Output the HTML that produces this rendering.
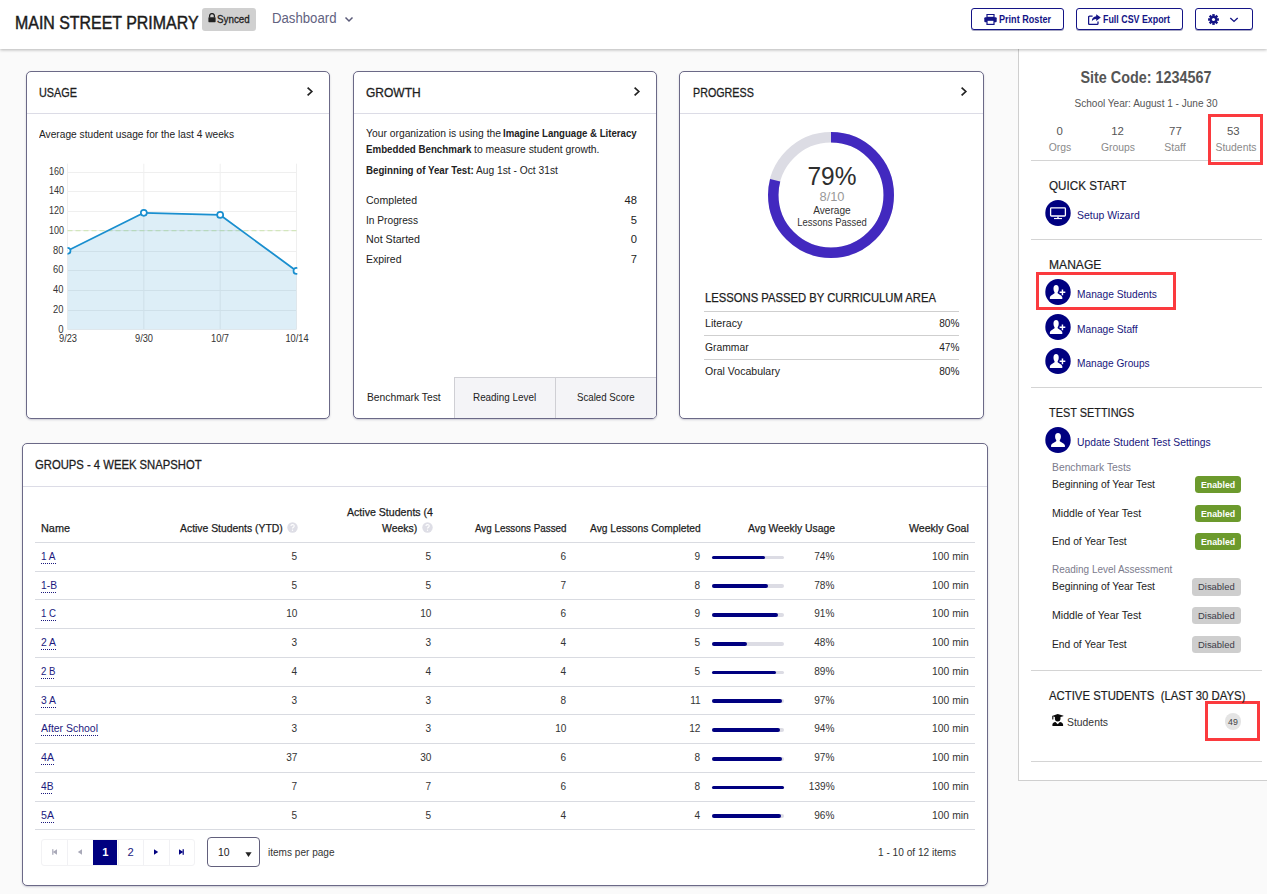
<!DOCTYPE html><html><head><meta charset="utf-8"><title>Main Street Primary - Dashboard</title><style>

html,body{margin:0;padding:0;overflow:hidden}
#p{position:absolute;left:0;top:0;width:1267px;height:894px;overflow:hidden}
body{width:1267px;height:894px;overflow:hidden;position:relative;background:#fafafa;font-family:"Liberation Sans",sans-serif;color:#222}
#p div,#p svg,#p span.a{position:absolute;box-sizing:border-box}
#p .t{white-space:nowrap}
#p b{font-weight:700}

</style></head><body><div id="p">
<div style="left:1018px;top:40px;width:260px;height:741px;background:#fff;border:1px solid #cfcfcf;"></div>
<div style="left:0px;top:0px;width:1267px;height:49px;background:#fff;box-shadow:0 1px 3px rgba(0,0,0,.28);"></div>
<div style="left:202px;top:8px;width:54px;height:23px;background:#d0d0d0;border-radius:3px;"></div>
<svg style="left:208px;top:13px" width="8" height="10" viewBox="0 0 8 10"><path d="M1.6 4.4V3a2.4 2.4 0 0 1 4.8 0v1.4" fill="none" stroke="#222" stroke-width="1.3"/><rect x="0.4" y="4.2" width="7.2" height="5" rx="0.6" fill="#222"/></svg>
<svg style="left:344px;top:16px" width="10" height="7" viewBox="0 0 10 7"><path d="M1.5 1.5 L5 5 L8.5 1.5" fill="none" stroke="#5a5a78" stroke-width="1.5"/></svg>
<div style="left:971px;top:8px;width:93px;height:22px;background:#fff;border:1px solid #141486;border-radius:3px;box-shadow:0 1px 0 rgba(0,0,80,.35);"></div>
<div style="left:1076px;top:8px;width:107px;height:22px;background:#fff;border:1px solid #141486;border-radius:3px;box-shadow:0 1px 0 rgba(0,0,80,.35);"></div>
<div style="left:1195px;top:8px;width:58px;height:22px;background:#fff;border:1px solid #141486;border-radius:3px;box-shadow:0 1px 0 rgba(0,0,80,.35);"></div>
<svg style="left:984px;top:14px" width="13" height="11" viewBox="0 0 13 11"><rect x="3" y="0.4" width="7" height="3" fill="none" stroke="#141486" stroke-width="1.2"/><rect x="0.3" y="3.2" width="12.4" height="5" rx="1" fill="#141486"/><rect x="3" y="6.2" width="7" height="4.2" fill="#fff" stroke="#141486" stroke-width="1.2"/></svg>
<svg style="left:1088px;top:14px" width="13" height="11" viewBox="0 0 13 11"><path d="M4.6 2.2H1.6a1 1 0 0 0-1 1V9.4a1 1 0 0 0 1 1H9a1 1 0 0 0 1-1V7.6" fill="none" stroke="#141486" stroke-width="1.3"/><path d="M8.2 0.2 L12.8 3.6 L8.2 7 V4.9 C6 4.9 4.6 5.7 3.8 7.6 C3.8 4.3 5.6 2.5 8.2 2.3 Z" fill="#141486"/></svg>
<svg style="left:1208px;top:14px" width="11" height="11" viewBox="-5.5 -5.5 11 11"><g fill="#141486"><circle r="3.7"/><rect x="-1.25" y="-5.4" width="2.5" height="3" transform="rotate(0)"/><rect x="-1.25" y="-5.4" width="2.5" height="3" transform="rotate(45)"/><rect x="-1.25" y="-5.4" width="2.5" height="3" transform="rotate(90)"/><rect x="-1.25" y="-5.4" width="2.5" height="3" transform="rotate(135)"/><rect x="-1.25" y="-5.4" width="2.5" height="3" transform="rotate(180)"/><rect x="-1.25" y="-5.4" width="2.5" height="3" transform="rotate(225)"/><rect x="-1.25" y="-5.4" width="2.5" height="3" transform="rotate(270)"/><rect x="-1.25" y="-5.4" width="2.5" height="3" transform="rotate(315)"/></g><circle r="1.55" fill="#fff"/></svg>
<svg style="left:1229px;top:17px" width="10" height="6" viewBox="0 0 10 6"><path d="M1.3 1 L5 4.4 L8.7 1" fill="none" stroke="#141486" stroke-width="1.4"/></svg>
<div style="left:26px;top:71px;width:304px;height:348px;background:#fff;border:1px solid #6b6987;border-radius:5px;box-shadow:0 1px 2px rgba(40,40,80,.22);"></div>
<div style="left:27px;top:113px;width:302px;height:1px;background:#dcdce6;"></div>
<svg style="left:306px;top:86px" width="8" height="10" viewBox="0 0 8 10"><path d="M1.6 1.6 L5.8 5.5 L1.6 9.4" fill="none" stroke="#222" stroke-width="1.7"/></svg>
<div style="left:353px;top:71px;width:304px;height:348px;background:#fff;border:1px solid #6b6987;border-radius:5px;box-shadow:0 1px 2px rgba(40,40,80,.22);"></div>
<div style="left:354px;top:113px;width:302px;height:1px;background:#dcdce6;"></div>
<svg style="left:633px;top:86px" width="8" height="10" viewBox="0 0 8 10"><path d="M1.6 1.6 L5.8 5.5 L1.6 9.4" fill="none" stroke="#222" stroke-width="1.7"/></svg>
<div style="left:679px;top:71px;width:305px;height:348px;background:#fff;border:1px solid #6b6987;border-radius:5px;box-shadow:0 1px 2px rgba(40,40,80,.22);"></div>
<div style="left:680px;top:113px;width:303px;height:1px;background:#dcdce6;"></div>
<svg style="left:960px;top:86px" width="8" height="10" viewBox="0 0 8 10"><path d="M1.6 1.6 L5.8 5.5 L1.6 9.4" fill="none" stroke="#222" stroke-width="1.7"/></svg>
<div style="left:22px;top:443px;width:966px;height:443px;background:#fff;border:1px solid #6b6987;border-radius:5px;box-shadow:0 1px 2px rgba(40,40,80,.22);"></div>
<div style="left:23px;top:486px;width:964px;height:1px;background:#dcdce6;"></div>
<svg style="left:0;top:150px" width="340" height="200" viewBox="0 150 340 200"><defs><clipPath id="cp"><rect x="67.5" y="163.7" width="229.8" height="166.3"/></clipPath></defs><line x1="67.5" x2="296.5" y1="329.5" y2="329.5" stroke="#efefef" stroke-width="1"/><line x1="67.5" x2="296.5" y1="310.5" y2="310.5" stroke="#efefef" stroke-width="1"/><line x1="67.5" x2="296.5" y1="290.5" y2="290.5" stroke="#efefef" stroke-width="1"/><line x1="67.5" x2="296.5" y1="270.5" y2="270.5" stroke="#efefef" stroke-width="1"/><line x1="67.5" x2="296.5" y1="251.5" y2="251.5" stroke="#efefef" stroke-width="1"/><line x1="67.5" x2="296.5" y1="230.5" y2="230.5" stroke="#efefef" stroke-width="1"/><line x1="67.5" x2="296.5" y1="211.5" y2="211.5" stroke="#efefef" stroke-width="1"/><line x1="67.5" x2="296.5" y1="191.5" y2="191.5" stroke="#efefef" stroke-width="1"/><line x1="67.5" x2="296.5" y1="172.5" y2="172.5" stroke="#efefef" stroke-width="1"/><line x1="67.50" x2="67.50" y1="163.7" y2="329.5" stroke="#efefef" stroke-width="1"/><line x1="143.83" x2="143.83" y1="163.7" y2="329.5" stroke="#efefef" stroke-width="1"/><line x1="220.17" x2="220.17" y1="163.7" y2="329.5" stroke="#efefef" stroke-width="1"/><line x1="296.50" x2="296.50" y1="163.7" y2="329.5" stroke="#efefef" stroke-width="1"/><line x1="67.5" x2="296.5" y1="230.6" y2="230.6" stroke="#d3e6bd" stroke-width="1.2" stroke-dasharray="5 3"/><g clip-path="url(#cp)"><polygon points="67.5,329.5 67.50,250.78 143.83,212.80 220.17,214.96 296.50,270.95 296.5,329.5" fill="rgba(26,140,204,0.15)"/><polyline points="67.50,250.78 143.83,212.80 220.17,214.96 296.50,270.95" fill="none" stroke="#1a8fcf" stroke-width="1.8" stroke-linejoin="round"/><circle cx="67.50" cy="250.78" r="3.0" fill="#fff" stroke="#1a8fcf" stroke-width="1.7"/><circle cx="143.83" cy="212.80" r="3.0" fill="#fff" stroke="#1a8fcf" stroke-width="1.7"/><circle cx="220.17" cy="214.96" r="3.0" fill="#fff" stroke="#1a8fcf" stroke-width="1.7"/><circle cx="296.50" cy="270.95" r="3.0" fill="#fff" stroke="#1a8fcf" stroke-width="1.7"/></g></svg>
<div style="left:454px;top:377px;width:102px;height:41px;background:#f4f4f7;border:1px solid #cfcfd4;border-right:0;border-bottom:0;"></div>
<div style="left:555px;top:377px;width:101px;height:41px;background:#f4f4f7;border-left:1px solid #cfcfd4;border-top:1px solid #cfcfd4;border-radius:0 0 4px 0;"></div>
<svg style="left:760px;top:124px" width="142" height="142" viewBox="760 124 142 142"><circle cx="831.0" cy="195.0" r="57.75" fill="none" stroke="#dcdce4" stroke-width="10.5"/><circle cx="831.0" cy="195.0" r="57.75" fill="none" stroke="#4229bf" stroke-width="10.5" stroke-dasharray="286.65 362.85" transform="rotate(-90 831.0 195.0)"/></svg>
<div style="left:704px;top:311px;width:255px;height:1px;background:#cfcfcf;"></div>
<div style="left:704px;top:335px;width:255px;height:1px;background:#cfcfcf;"></div>
<div style="left:704px;top:359px;width:255px;height:1px;background:#cfcfcf;"></div>
<div style="left:1031px;top:160px;width:231px;height:1px;background:#d4d4d4;"></div>
<div style="left:1031px;top:239px;width:231px;height:1px;background:#d4d4d4;"></div>
<div style="left:1031px;top:387px;width:231px;height:1px;background:#d4d4d4;"></div>
<div style="left:1031px;top:670px;width:231px;height:1px;background:#d4d4d4;"></div>
<div style="left:1031px;top:761px;width:231px;height:1px;background:#d4d4d4;"></div>
<div style="left:1208px;top:114px;width:55px;height:51px;border:3px solid #fb3a3e;"></div>
<svg style="left:1045px;top:200px" width="26" height="26" viewBox="-13 -13 26 26"><ellipse rx="12.7" ry="12.95" fill="#000080"/><rect x="-7.4" y="-5.1" width="14.8" height="8.1" rx="0.8" fill="none" stroke="#fff" stroke-width="1.3"/><rect x="-0.7" y="3.6" width="1.4" height="1.7" fill="#fff"/><rect x="-4" y="5.0" width="8" height="1.1" fill="#fff"/></svg>
<div style="left:1036px;top:272px;width:140px;height:38px;border:3px solid #fb3a3e;"></div>
<svg style="left:1045px;top:279px" width="26" height="26" viewBox="-13 -13 26 26"><ellipse rx="12.7" ry="12.95" fill="#000080"/><g transform="translate(-1.9 0) scale(0.9 1)" fill="#fff"><ellipse cx="0" cy="-3.3" rx="2.9" ry="3.7"/><path d="M-1.7 -1 L-1.7 0.9 C-2.2 2.2 -6.1 2.6 -6.9 5.2 L-6.9 7.1 L6.9 7.1 L6.9 5.2 C6.1 2.6 2.2 2.2 1.7 0.9 L1.7 -1 Z"/></g><path d="M1.6 0.3 H7.3 M4.45 -2.55 V3.15" stroke="#fff" stroke-width="1.45" fill="none"/></svg>
<svg style="left:1045px;top:314px" width="26" height="26" viewBox="-13 -13 26 26"><ellipse rx="12.7" ry="12.95" fill="#000080"/><g transform="translate(-1.9 0) scale(0.9 1)" fill="#fff"><ellipse cx="0" cy="-3.3" rx="2.9" ry="3.7"/><path d="M-1.7 -1 L-1.7 0.9 C-2.2 2.2 -6.1 2.6 -6.9 5.2 L-6.9 7.1 L6.9 7.1 L6.9 5.2 C6.1 2.6 2.2 2.2 1.7 0.9 L1.7 -1 Z"/></g><path d="M1.6 0.3 H7.3 M4.45 -2.55 V3.15" stroke="#fff" stroke-width="1.45" fill="none"/></svg>
<svg style="left:1045px;top:348px" width="26" height="26" viewBox="-13 -13 26 26"><ellipse rx="12.7" ry="12.95" fill="#000080"/><g transform="translate(-1.9 0) scale(0.9 1)" fill="#fff"><ellipse cx="0" cy="-3.3" rx="2.9" ry="3.7"/><path d="M-1.7 -1 L-1.7 0.9 C-2.2 2.2 -6.1 2.6 -6.9 5.2 L-6.9 7.1 L6.9 7.1 L6.9 5.2 C6.1 2.6 2.2 2.2 1.7 0.9 L1.7 -1 Z"/></g><path d="M1.6 0.3 H7.3 M4.45 -2.55 V3.15" stroke="#fff" stroke-width="1.45" fill="none"/></svg>
<svg style="left:1045px;top:427px" width="26" height="26" viewBox="-13 -13 26 26"><ellipse rx="12.7" ry="12.95" fill="#000080"/><g transform="translate(0 0) scale(1 1)" fill="#fff"><ellipse cx="0" cy="-3.3" rx="2.9" ry="3.7"/><path d="M-1.7 -1 L-1.7 0.9 C-2.2 2.2 -6.1 2.6 -6.9 5.2 L-6.9 7.1 L6.9 7.1 L6.9 5.2 C6.1 2.6 2.2 2.2 1.7 0.9 L1.7 -1 Z"/></g></svg>
<div style="left:1195px;top:476px;width:46px;height:17px;background:#6c9a2d;border-radius:3.5px;"></div>
<div style="left:1195px;top:505px;width:46px;height:17px;background:#6c9a2d;border-radius:3.5px;"></div>
<div style="left:1195px;top:533px;width:46px;height:17px;background:#6c9a2d;border-radius:3.5px;"></div>
<div style="left:1192px;top:578px;width:49px;height:18px;background:#cecece;border-radius:3.5px;"></div>
<div style="left:1192px;top:607px;width:49px;height:17px;background:#cecece;border-radius:3.5px;"></div>
<div style="left:1192px;top:636px;width:49px;height:17px;background:#cecece;border-radius:3.5px;"></div>
<svg style="left:1052.4px;top:713.6px" width="11.6" height="12.4" viewBox="0 0 11.6 12.4"><g fill="#0a0a0a"><path d="M5.7 0 L11.6 1.7 L11.2 2.3 L8.6 3 L2.8 3 L0 2 Z"/><rect x="0.25" y="2" width="1.1" height="3.6" rx="0.4"/><path d="M2.9 2.8 H8.5 V4.6 A2.8 2.9 0 0 1 2.9 4.6 Z"/><path d="M3.5 7.9 L5.7 10.2 L7.9 7.9 C9.9 8.2 11.1 9.2 11.1 10.6 V12.3 H0.4 V10.6 C0.4 9.2 1.5 8.2 3.5 7.9 Z"/></g></svg>
<div style="left:1224.7px;top:713.0px;width:16.4px;height:17.4px;background:#e4e4e4;border-radius:8.5px;"></div>
<div style="left:1205px;top:701px;width:55px;height:40px;border:3px solid #fb3a3e;"></div>
<svg style="left:287.3px;top:522.1px" width="11" height="11" viewBox="-5.5 -5.5 11 11"><circle r="5.2" fill="#dedee6"/><path d="M-1.6 -1.5 C-1.6 -3.4 1.7 -3.4 1.7 -1.5 C1.7 -0.2 0 -0.3 0 1.1" fill="none" stroke="#fff" stroke-width="1.1"/><circle cx="0" cy="2.7" r="0.7" fill="#fff"/></svg>
<svg style="left:421.6px;top:522.1px" width="11" height="11" viewBox="-5.5 -5.5 11 11"><circle r="5.2" fill="#dedee6"/><path d="M-1.6 -1.5 C-1.6 -3.4 1.7 -3.4 1.7 -1.5 C1.7 -0.2 0 -0.3 0 1.1" fill="none" stroke="#fff" stroke-width="1.1"/><circle cx="0" cy="2.7" r="0.7" fill="#fff"/></svg>
<div style="left:35px;top:542px;width:940px;height:1px;background:#d9dbe1;"></div>
<div style="left:35px;top:571px;width:940px;height:1px;background:#d9dbe1;"></div>
<div style="left:41px;top:563px;width:15px;height:1px;border-bottom:1px dotted #1c1a7e;"></div>
<div style="left:712px;top:556px;width:72px;height:3px;background:#dcdce4;border-radius:2px;"></div>
<div style="left:712px;top:556px;width:53px;height:3px;background:#000080;border-radius:2px;"></div>
<div style="left:35px;top:599px;width:940px;height:1px;background:#d9dbe1;"></div>
<div style="left:41px;top:592px;width:15px;height:1px;border-bottom:1px dotted #1c1a7e;"></div>
<div style="left:712px;top:584px;width:72px;height:4px;background:#dcdce4;border-radius:2px;"></div>
<div style="left:712px;top:584px;width:56px;height:4px;background:#000080;border-radius:2px;"></div>
<div style="left:35px;top:628px;width:940px;height:1px;background:#d9dbe1;"></div>
<div style="left:41px;top:620px;width:15px;height:1px;border-bottom:1px dotted #1c1a7e;"></div>
<div style="left:712px;top:613px;width:72px;height:4px;background:#dcdce4;border-radius:2px;"></div>
<div style="left:712px;top:613px;width:66px;height:4px;background:#000080;border-radius:2px;"></div>
<div style="left:35px;top:657px;width:940px;height:1px;background:#d9dbe1;"></div>
<div style="left:41px;top:649px;width:15px;height:1px;border-bottom:1px dotted #1c1a7e;"></div>
<div style="left:712px;top:642px;width:72px;height:4px;background:#dcdce4;border-radius:2px;"></div>
<div style="left:712px;top:642px;width:35px;height:4px;background:#000080;border-radius:2px;"></div>
<div style="left:35px;top:686px;width:940px;height:1px;background:#d9dbe1;"></div>
<div style="left:41px;top:678px;width:13px;height:1px;border-bottom:1px dotted #1c1a7e;"></div>
<div style="left:712px;top:671px;width:72px;height:3px;background:#dcdce4;border-radius:2px;"></div>
<div style="left:712px;top:671px;width:64px;height:3px;background:#000080;border-radius:2px;"></div>
<div style="left:35px;top:714px;width:940px;height:1px;background:#d9dbe1;"></div>
<div style="left:41px;top:707px;width:15px;height:1px;border-bottom:1px dotted #1c1a7e;"></div>
<div style="left:712px;top:699px;width:72px;height:4px;background:#dcdce4;border-radius:2px;"></div>
<div style="left:712px;top:699px;width:70px;height:4px;background:#000080;border-radius:2px;"></div>
<div style="left:35px;top:743px;width:940px;height:1px;background:#d9dbe1;"></div>
<div style="left:41px;top:735px;width:57px;height:1px;border-bottom:1px dotted #1c1a7e;"></div>
<div style="left:712px;top:728px;width:72px;height:4px;background:#dcdce4;border-radius:2px;"></div>
<div style="left:712px;top:728px;width:68px;height:4px;background:#000080;border-radius:2px;"></div>
<div style="left:35px;top:772px;width:940px;height:1px;background:#d9dbe1;"></div>
<div style="left:41px;top:764px;width:13px;height:1px;border-bottom:1px dotted #1c1a7e;"></div>
<div style="left:712px;top:757px;width:72px;height:4px;background:#dcdce4;border-radius:2px;"></div>
<div style="left:712px;top:757px;width:70px;height:4px;background:#000080;border-radius:2px;"></div>
<div style="left:35px;top:801px;width:940px;height:1px;background:#d9dbe1;"></div>
<div style="left:41px;top:793px;width:11px;height:1px;border-bottom:1px dotted #1c1a7e;"></div>
<div style="left:712px;top:786px;width:72px;height:3px;background:#dcdce4;border-radius:2px;"></div>
<div style="left:712px;top:786px;width:72px;height:3px;background:#000080;border-radius:2px;"></div>
<div style="left:35px;top:829px;width:940px;height:1px;background:#d9dbe1;"></div>
<div style="left:41px;top:822px;width:13px;height:1px;border-bottom:1px dotted #1c1a7e;"></div>
<div style="left:712px;top:814px;width:72px;height:4px;background:#dcdce4;border-radius:2px;"></div>
<div style="left:712px;top:814px;width:69px;height:4px;background:#000080;border-radius:2px;"></div>
<div style="left:41px;top:839px;width:154px;height:27px;background:#fff;border:1px solid #f2f2f4;border-radius:3px;"></div>
<div style="left:67px;top:840px;width:1px;height:25px;background:#f1f1f4;"></div>
<div style="left:143px;top:840px;width:1px;height:25px;background:#f1f1f4;"></div>
<div style="left:169px;top:840px;width:1px;height:25px;background:#f1f1f4;"></div>
<div style="left:118px;top:840px;width:1px;height:25px;background:#f1f1f4;"></div>
<div style="left:93px;top:840px;width:24px;height:25px;background:#000080;"></div>
<svg style="left:49.6px;top:846.9px" width="10" height="10" viewBox="-5 -5 10 10"><g fill="#a9a9b8"><path d="M2 -2.8 L-2.2 0 L2 2.8 Z"/><rect x="-2.8" y="-2.8" width="1.2" height="5.6"/></g></svg>
<svg style="left:75.0px;top:846.9px" width="10" height="10" viewBox="-5 -5 10 10"><g fill="#a9a9b8"><path d="M2 -2.8 L-2.2 0 L2 2.8 Z"/></g></svg>
<svg style="left:151.1px;top:846.9px" width="10" height="10" viewBox="-5 -5 10 10"><g fill="#000080"><path d="M-2 -2.8 L2.2 0 L-2 2.8 Z"/></g></svg>
<svg style="left:176.1px;top:846.9px" width="10" height="10" viewBox="-5 -5 10 10"><g fill="#000080"><path d="M-2 -2.8 L2.2 0 L-2 2.8 Z"/><rect x="1.6" y="-2.8" width="1.2" height="5.6"/></g></svg>
<div style="left:207px;top:837px;width:53px;height:30px;background:#fff;border:1px solid #62607c;border-radius:4px;"></div>
<svg style="left:244px;top:851px" width="9" height="7" viewBox="0 0 9 7"><path d="M1.4 1.2 H7.6 L4.5 5.9 Z" fill="#222"/></svg>
<div class="t" style="top:12.80px;height:20px;line-height:20px;font-size:18px;color:#1b1b1b;left:15px;transform-origin:0 50%;transform:scaleX(0.8849);-webkit-text-stroke:0.45px #1b1b1b;">MAIN STREET PRIMARY</div>
<div class="t" style="top:9.30px;height:20px;line-height:20px;font-size:11px;color:#222;left:217.2px;transform-origin:0 50%;transform:scaleX(0.8909);-webkit-text-stroke:0.3px #222;">Synced</div>
<div class="t" style="top:8.30px;height:20px;line-height:20px;font-size:14px;color:#626280;left:272px;transform-origin:0 50%;transform:scaleX(0.9416);">Dashboard</div>
<div class="t" style="top:10.00px;height:20px;line-height:20px;font-size:10px;color:#141486;font-weight:700;left:998.8px;transform-origin:0 50%;transform:scaleX(0.9085);">Print Roster</div>
<div class="t" style="top:10.00px;height:20px;line-height:20px;font-size:10px;color:#141486;font-weight:700;left:1103.4px;transform-origin:0 50%;transform:scaleX(0.8867);">Full CSV Export</div>
<div class="t" style="top:83.10px;height:20px;line-height:20px;font-size:13px;color:#1d1d1d;left:39px;transform-origin:0 50%;transform:scaleX(0.8349);-webkit-text-stroke:0.3px #1d1d1d;">USAGE</div>
<div class="t" style="top:83.10px;height:20px;line-height:20px;font-size:13px;color:#1d1d1d;left:365.5px;transform-origin:0 50%;transform:scaleX(0.9237);-webkit-text-stroke:0.3px #1d1d1d;">GROWTH</div>
<div class="t" style="top:83.10px;height:20px;line-height:20px;font-size:13px;color:#1d1d1d;left:692.7px;transform-origin:0 50%;transform:scaleX(0.8251);-webkit-text-stroke:0.3px #1d1d1d;">PROGRESS</div>
<div class="t" style="top:455.20px;height:20px;line-height:20px;font-size:13px;color:#1d1d1d;left:35.2px;transform-origin:0 50%;transform:scaleX(0.8670);-webkit-text-stroke:0.3px #1d1d1d;">GROUPS - 4 WEEK SNAPSHOT</div>
<div class="t" style="top:124.20px;height:20px;line-height:20px;font-size:11.2px;color:#222;left:39px;transform-origin:0 50%;transform:scaleX(0.9097);">Average student usage for the last 4 weeks</div>
<div class="t" style="top:320.00px;height:20px;line-height:20px;font-size:10.2px;color:#333;right:1203.40px;transform-origin:100% 50%;transform:scaleX(0.9344);">0</div>
<div class="t" style="top:300.00px;height:20px;line-height:20px;font-size:10.2px;color:#333;right:1203.40px;transform-origin:100% 50%;transform:scaleX(0.9168);">20</div>
<div class="t" style="top:280.00px;height:20px;line-height:20px;font-size:10.2px;color:#333;right:1203.40px;transform-origin:100% 50%;transform:scaleX(0.9168);">40</div>
<div class="t" style="top:260.00px;height:20px;line-height:20px;font-size:10.2px;color:#333;right:1203.40px;transform-origin:100% 50%;transform:scaleX(0.9168);">60</div>
<div class="t" style="top:241.00px;height:20px;line-height:20px;font-size:10.2px;color:#333;right:1203.40px;transform-origin:100% 50%;transform:scaleX(0.9168);">80</div>
<div class="t" style="top:221.00px;height:20px;line-height:20px;font-size:10.2px;color:#333;right:1203.40px;transform-origin:100% 50%;transform:scaleX(0.8824);">100</div>
<div class="t" style="top:201.00px;height:20px;line-height:20px;font-size:10.2px;color:#333;right:1203.40px;transform-origin:100% 50%;transform:scaleX(0.8824);">120</div>
<div class="t" style="top:181.00px;height:20px;line-height:20px;font-size:10.2px;color:#333;right:1203.40px;transform-origin:100% 50%;transform:scaleX(0.8824);">140</div>
<div class="t" style="top:162.00px;height:20px;line-height:20px;font-size:10.2px;color:#333;right:1203.40px;transform-origin:100% 50%;transform:scaleX(0.8824);">160</div>
<div class="t" style="top:329.00px;height:20px;line-height:20px;font-size:10.2px;color:#333;left:-232.50px;width:600px;text-align:center;transform-origin:50% 50%;transform:scaleX(0.9100);"><span>9/23</span></div>
<div class="t" style="top:329.00px;height:20px;line-height:20px;font-size:10.2px;color:#333;left:-156.17px;width:600px;text-align:center;transform-origin:50% 50%;transform:scaleX(0.9100);"><span>9/30</span></div>
<div class="t" style="top:329.00px;height:20px;line-height:20px;font-size:10.2px;color:#333;left:-79.83px;width:600px;text-align:center;transform-origin:50% 50%;transform:scaleX(0.9100);"><span>10/7</span></div>
<div class="t" style="top:329.00px;height:20px;line-height:20px;font-size:10.2px;color:#333;left:-3.50px;width:600px;text-align:center;transform-origin:50% 50%;transform:scaleX(0.9100);"><span>10/14</span></div>
<div class="t" style="top:123.30px;height:20px;line-height:20px;font-size:11.2px;color:#222;left:365.7px;transform-origin:0 50%;transform:scaleX(0.9223);">Your organization is using the</div>
<div class="t" style="top:123.30px;height:20px;line-height:20px;font-size:11.2px;color:#222;font-weight:700;left:503.2px;transform-origin:0 50%;transform:scaleX(0.8595);">Imagine Language &amp; Literacy</div>
<div class="t" style="top:139.20px;height:20px;line-height:20px;font-size:11.2px;color:#222;font-weight:700;left:365.7px;transform-origin:0 50%;transform:scaleX(0.8702);">Embedded Benchmark</div>
<div class="t" style="top:139.20px;height:20px;line-height:20px;font-size:11.2px;color:#222;left:474.1px;transform-origin:0 50%;transform:scaleX(0.9257);">to measure student growth.</div>
<div class="t" style="top:160.10px;height:20px;line-height:20px;font-size:11.2px;color:#222;font-weight:700;left:365.7px;transform-origin:0 50%;transform:scaleX(0.8691);">Beginning of Year Test:</div>
<div class="t" style="top:160.10px;height:20px;line-height:20px;font-size:11.2px;color:#222;left:476.1px;transform-origin:0 50%;transform:scaleX(0.9146);">Aug 1st - Oct 31st</div>
<div class="t" style="top:190.40px;height:20px;line-height:20px;font-size:11.2px;color:#222;left:365.7px;transform-origin:0 50%;transform:scaleX(0.9425);">Completed</div>
<div class="t" style="top:190.40px;height:20px;line-height:20px;font-size:11.2px;color:#222;right:630.10px;transform-origin:100% 50%;">48</div>
<div class="t" style="top:210.30px;height:20px;line-height:20px;font-size:11.2px;color:#222;left:365.7px;transform-origin:0 50%;transform:scaleX(0.9088);">In Progress</div>
<div class="t" style="top:210.30px;height:20px;line-height:20px;font-size:11.2px;color:#222;right:630.10px;transform-origin:100% 50%;">5</div>
<div class="t" style="top:229.10px;height:20px;line-height:20px;font-size:11.2px;color:#222;left:365.7px;transform-origin:0 50%;transform:scaleX(0.9542);">Not Started</div>
<div class="t" style="top:229.10px;height:20px;line-height:20px;font-size:11.2px;color:#222;right:630.10px;transform-origin:100% 50%;">0</div>
<div class="t" style="top:249.10px;height:20px;line-height:20px;font-size:11.2px;color:#222;left:365.7px;transform-origin:0 50%;transform:scaleX(0.9357);">Expired</div>
<div class="t" style="top:249.10px;height:20px;line-height:20px;font-size:11.2px;color:#222;right:630.10px;transform-origin:100% 50%;">7</div>
<div class="t" style="top:387.30px;height:20px;line-height:20px;font-size:11.2px;color:#222;left:367px;transform-origin:0 50%;transform:scaleX(0.9211);">Benchmark Test</div>
<div class="t" style="top:387.30px;height:20px;line-height:20px;font-size:11.2px;color:#222;left:473.2px;transform-origin:0 50%;transform:scaleX(0.8821);">Reading Level</div>
<div class="t" style="top:387.30px;height:20px;line-height:20px;font-size:11.2px;color:#222;left:577px;transform-origin:0 50%;transform:scaleX(0.8671);">Scaled Score</div>
<div class="t" style="top:161.00px;height:30px;line-height:30px;font-size:25px;color:#2e2e2e;left:531.50px;width:600px;text-align:center;transform-origin:50% 50%;transform:scaleX(0.9791);"><span>79%</span></div>
<div class="t" style="top:186.80px;height:20px;line-height:20px;font-size:12.5px;color:#999;left:531.50px;width:600px;text-align:center;transform-origin:50% 50%;transform:scaleX(1.0270);"><span>8/10</span></div>
<div class="t" style="top:200.40px;height:20px;line-height:20px;font-size:11.2px;color:#333;left:531.60px;width:600px;text-align:center;transform-origin:50% 50%;transform:scaleX(0.9043);"><span>Average</span></div>
<div class="t" style="top:212.00px;height:20px;line-height:20px;font-size:11.2px;color:#333;left:531.70px;width:600px;text-align:center;transform-origin:50% 50%;transform:scaleX(0.8454);"><span>Lessons Passed</span></div>
<div class="t" style="top:288.00px;height:20px;line-height:20px;font-size:13px;color:#1d1d1d;left:704.6px;transform-origin:0 50%;transform:scaleX(0.8657);-webkit-text-stroke:0.25px #1d1d1d;">LESSONS PASSED BY CURRICULUM AREA</div>
<div class="t" style="top:313.30px;height:20px;line-height:20px;font-size:11.2px;color:#222;left:704.7px;transform-origin:0 50%;transform:scaleX(0.9518);">Literacy</div>
<div class="t" style="top:313.30px;height:20px;line-height:20px;font-size:11.2px;color:#222;right:308.00px;transform-origin:100% 50%;transform:scaleX(0.9015);">80%</div>
<div class="t" style="top:337.20px;height:20px;line-height:20px;font-size:11.2px;color:#222;left:704.7px;transform-origin:0 50%;transform:scaleX(0.9228);">Grammar</div>
<div class="t" style="top:337.20px;height:20px;line-height:20px;font-size:11.2px;color:#222;right:308.00px;transform-origin:100% 50%;transform:scaleX(0.9015);">47%</div>
<div class="t" style="top:361.00px;height:20px;line-height:20px;font-size:11.2px;color:#222;left:704.7px;transform-origin:0 50%;transform:scaleX(0.9421);">Oral Vocabulary</div>
<div class="t" style="top:361.00px;height:20px;line-height:20px;font-size:11.2px;color:#222;right:308.00px;transform-origin:100% 50%;transform:scaleX(0.9015);">80%</div>
<div class="t" style="top:67.60px;height:20px;line-height:20px;font-size:16px;color:#555;font-weight:700;left:846.40px;width:600px;text-align:center;transform-origin:50% 50%;transform:scaleX(0.8981);"><span>Site Code: 1234567</span></div>
<div class="t" style="top:93.20px;height:20px;line-height:20px;font-size:11.2px;color:#555;left:846.30px;width:600px;text-align:center;transform-origin:50% 50%;transform:scaleX(0.8980);"><span>School Year: August 1 - June 30</span></div>
<div class="t" style="top:120.90px;height:20px;line-height:20px;font-size:11.4px;color:#555;left:759.60px;width:600px;text-align:center;transform-origin:50% 50%;"><span>0</span></div>
<div class="t" style="top:137.20px;height:20px;line-height:20px;font-size:11.4px;color:#8a8a8a;left:759.60px;width:600px;text-align:center;transform-origin:50% 50%;transform:scaleX(0.9114);"><span>Orgs</span></div>
<div class="t" style="top:120.90px;height:20px;line-height:20px;font-size:11.4px;color:#555;left:817.50px;width:600px;text-align:center;transform-origin:50% 50%;"><span>12</span></div>
<div class="t" style="top:137.20px;height:20px;line-height:20px;font-size:11.4px;color:#8a8a8a;left:817.50px;width:600px;text-align:center;transform-origin:50% 50%;transform:scaleX(0.9101);"><span>Groups</span></div>
<div class="t" style="top:120.90px;height:20px;line-height:20px;font-size:11.4px;color:#555;left:875.40px;width:600px;text-align:center;transform-origin:50% 50%;"><span>77</span></div>
<div class="t" style="top:137.20px;height:20px;line-height:20px;font-size:11.4px;color:#8a8a8a;left:875.40px;width:600px;text-align:center;transform-origin:50% 50%;transform:scaleX(0.9254);"><span>Staff</span></div>
<div class="t" style="top:120.90px;height:20px;line-height:20px;font-size:11.4px;color:#555;left:933.30px;width:600px;text-align:center;transform-origin:50% 50%;"><span>53</span></div>
<div class="t" style="top:137.20px;height:20px;line-height:20px;font-size:11.4px;color:#8a8a8a;left:935.70px;width:600px;text-align:center;transform-origin:50% 50%;transform:scaleX(0.9117);"><span>Students</span></div>
<div class="t" style="top:176.00px;height:20px;line-height:20px;font-size:13px;color:#1d1d1d;left:1048.5px;transform-origin:0 50%;transform:scaleX(0.8979);-webkit-text-stroke:0.2px #1d1d1d;">QUICK START</div>
<div class="t" style="top:255.00px;height:20px;line-height:20px;font-size:13px;color:#1d1d1d;left:1048.5px;transform-origin:0 50%;transform:scaleX(0.9300);-webkit-text-stroke:0.2px #1d1d1d;">MANAGE</div>
<div class="t" style="top:403.00px;height:20px;line-height:20px;font-size:13px;color:#1d1d1d;left:1048.5px;transform-origin:0 50%;transform:scaleX(0.8395);-webkit-text-stroke:0.2px #1d1d1d;">TEST SETTINGS</div>
<div class="t" style="top:686.00px;height:20px;line-height:20px;font-size:13px;color:#1d1d1d;left:1048.5px;transform-origin:0 50%;transform:scaleX(0.8733);-webkit-text-stroke:0.2px #1d1d1d;">ACTIVE STUDENTS&nbsp; (LAST 30 DAYS)</div>
<div class="t" style="top:205.10px;height:20px;line-height:20px;font-size:11.2px;color:#17167c;left:1077.1px;transform-origin:0 50%;transform:scaleX(0.9336);">Setup Wizard</div>
<div class="t" style="top:284.00px;height:20px;line-height:20px;font-size:11.2px;color:#17167c;left:1077.1px;transform-origin:0 50%;transform:scaleX(0.9110);">Manage Students</div>
<div class="t" style="top:319.10px;height:20px;line-height:20px;font-size:11.2px;color:#17167c;left:1077.1px;transform-origin:0 50%;transform:scaleX(0.9134);">Manage Staff</div>
<div class="t" style="top:353.10px;height:20px;line-height:20px;font-size:11.2px;color:#17167c;left:1077.1px;transform-origin:0 50%;transform:scaleX(0.9048);">Manage Groups</div>
<div class="t" style="top:432.30px;height:20px;line-height:20px;font-size:11.2px;color:#17167c;left:1077.1px;transform-origin:0 50%;transform:scaleX(0.9232);">Update Student Test Settings</div>
<div class="t" style="top:457.20px;height:20px;line-height:20px;font-size:11.2px;color:#7b7b8c;left:1051.9px;transform-origin:0 50%;transform:scaleX(0.9228);">Benchmark Tests</div>
<div class="t" style="top:559.00px;height:20px;line-height:20px;font-size:11.2px;color:#7b7b8c;left:1051.9px;transform-origin:0 50%;transform:scaleX(0.8907);">Reading Level Assessment</div>
<div class="t" style="top:474.00px;height:20px;line-height:20px;font-size:11.2px;color:#222;left:1051.9px;transform-origin:0 50%;transform:scaleX(0.9268);">Beginning of Year Test</div>
<div class="t" style="top:475.00px;height:20px;line-height:20px;font-size:9.6px;color:#fff;font-weight:700;left:1201.0px;transform-origin:0 50%;transform:scaleX(0.9162);">Enabled</div>
<div class="t" style="top:503.20px;height:20px;line-height:20px;font-size:11.2px;color:#222;left:1051.9px;transform-origin:0 50%;transform:scaleX(0.9456);">Middle of Year Test</div>
<div class="t" style="top:504.00px;height:20px;line-height:20px;font-size:9.6px;color:#fff;font-weight:700;left:1201.0px;transform-origin:0 50%;transform:scaleX(0.9162);">Enabled</div>
<div class="t" style="top:531.10px;height:20px;line-height:20px;font-size:11.2px;color:#222;left:1051.9px;transform-origin:0 50%;transform:scaleX(0.9190);">End of Year Test</div>
<div class="t" style="top:532.00px;height:20px;line-height:20px;font-size:9.6px;color:#fff;font-weight:700;left:1201.0px;transform-origin:0 50%;transform:scaleX(0.9162);">Enabled</div>
<div class="t" style="top:576.20px;height:20px;line-height:20px;font-size:11.2px;color:#222;left:1051.9px;transform-origin:0 50%;transform:scaleX(0.9268);">Beginning of Year Test</div>
<div class="t" style="top:577.00px;height:20px;line-height:20px;font-size:9.6px;color:#3c3c48;left:1198.3px;transform-origin:0 50%;transform:scaleX(0.9828);">Disabled</div>
<div class="t" style="top:605.20px;height:20px;line-height:20px;font-size:11.2px;color:#222;left:1051.9px;transform-origin:0 50%;transform:scaleX(0.9456);">Middle of Year Test</div>
<div class="t" style="top:606.00px;height:20px;line-height:20px;font-size:9.6px;color:#3c3c48;left:1198.3px;transform-origin:0 50%;transform:scaleX(0.9828);">Disabled</div>
<div class="t" style="top:634.20px;height:20px;line-height:20px;font-size:11.2px;color:#222;left:1051.9px;transform-origin:0 50%;transform:scaleX(0.9190);">End of Year Test</div>
<div class="t" style="top:635.00px;height:20px;line-height:20px;font-size:9.6px;color:#3c3c48;left:1198.3px;transform-origin:0 50%;transform:scaleX(0.9828);">Disabled</div>
<div class="t" style="top:712.00px;height:20px;line-height:20px;font-size:11.2px;color:#333;left:1066.5px;transform-origin:0 50%;transform:scaleX(0.9282);">Students</div>
<div class="t" style="top:712.00px;height:20px;line-height:20px;font-size:9.6px;color:#444;left:933.00px;width:600px;text-align:center;transform-origin:50% 50%;transform:scaleX(0.9183);"><span>49</span></div>
<div class="t" style="top:518.40px;height:20px;line-height:20px;font-size:11.2px;color:#1d1d1d;left:41.4px;transform-origin:0 50%;transform:scaleX(0.9717);-webkit-text-stroke:0.25px #1d1d1d;">Name</div>
<div class="t" style="top:518.40px;height:20px;line-height:20px;font-size:11.2px;color:#1d1d1d;left:180.4px;transform-origin:0 50%;transform:scaleX(0.9289);-webkit-text-stroke:0.25px #1d1d1d;">Active Students (YTD)</div>
<div class="t" style="top:502.20px;height:20px;line-height:20px;font-size:11.2px;color:#1d1d1d;left:346.5px;transform-origin:0 50%;transform:scaleX(0.9472);-webkit-text-stroke:0.25px #1d1d1d;">Active Students (4</div>
<div class="t" style="top:518.30px;height:20px;line-height:20px;font-size:11.2px;color:#1d1d1d;left:382.4px;transform-origin:0 50%;transform:scaleX(0.9332);-webkit-text-stroke:0.25px #1d1d1d;">Weeks)</div>
<div class="t" style="top:518.40px;height:20px;line-height:20px;font-size:11.2px;color:#1d1d1d;left:474.8px;transform-origin:0 50%;transform:scaleX(0.8774);-webkit-text-stroke:0.25px #1d1d1d;">Avg Lessons Passed</div>
<div class="t" style="top:518.40px;height:20px;line-height:20px;font-size:11.2px;color:#1d1d1d;left:589.8px;transform-origin:0 50%;transform:scaleX(0.9135);-webkit-text-stroke:0.25px #1d1d1d;">Avg Lessons Completed</div>
<div class="t" style="top:518.40px;height:20px;line-height:20px;font-size:11.2px;color:#1d1d1d;left:747.7px;transform-origin:0 50%;transform:scaleX(0.9245);-webkit-text-stroke:0.25px #1d1d1d;">Avg Weekly Usage</div>
<div class="t" style="top:518.40px;height:20px;line-height:20px;font-size:11.2px;color:#1d1d1d;left:909.4px;transform-origin:0 50%;transform:scaleX(0.9459);-webkit-text-stroke:0.25px #1d1d1d;">Weekly Goal</div>
<div class="t" style="top:546.00px;height:20px;line-height:20px;font-size:11.2px;color:#1c1a7e;left:41.4px;transform-origin:0 50%;transform:scaleX(0.8958);">1 A</div>
<div class="t" style="top:546.00px;height:20px;line-height:20px;font-size:11.2px;color:#333;right:969.70px;transform-origin:100% 50%;transform:scaleX(0.9000);">5</div>
<div class="t" style="top:546.00px;height:20px;line-height:20px;font-size:11.2px;color:#333;right:835.50px;transform-origin:100% 50%;transform:scaleX(0.9000);">5</div>
<div class="t" style="top:546.00px;height:20px;line-height:20px;font-size:11.2px;color:#333;right:700.90px;transform-origin:100% 50%;transform:scaleX(0.9000);">6</div>
<div class="t" style="top:546.00px;height:20px;line-height:20px;font-size:11.2px;color:#333;right:566.80px;transform-origin:100% 50%;transform:scaleX(0.9000);">9</div>
<div class="t" style="top:546.00px;height:20px;line-height:20px;font-size:11.2px;color:#333;right:432.70px;transform-origin:100% 50%;transform:scaleX(0.9000);">74%</div>
<div class="t" style="top:546.00px;height:20px;line-height:20px;font-size:11.2px;color:#333;right:298.40px;transform-origin:100% 50%;transform:scaleX(0.9243);">100 min</div>
<div class="t" style="top:575.00px;height:20px;line-height:20px;font-size:11.2px;color:#1c1a7e;left:41.4px;transform-origin:0 50%;transform:scaleX(0.9184);">1-B</div>
<div class="t" style="top:575.00px;height:20px;line-height:20px;font-size:11.2px;color:#333;right:969.70px;transform-origin:100% 50%;transform:scaleX(0.9000);">5</div>
<div class="t" style="top:575.00px;height:20px;line-height:20px;font-size:11.2px;color:#333;right:835.50px;transform-origin:100% 50%;transform:scaleX(0.9000);">5</div>
<div class="t" style="top:575.00px;height:20px;line-height:20px;font-size:11.2px;color:#333;right:700.90px;transform-origin:100% 50%;transform:scaleX(0.9000);">7</div>
<div class="t" style="top:575.00px;height:20px;line-height:20px;font-size:11.2px;color:#333;right:566.80px;transform-origin:100% 50%;transform:scaleX(0.9000);">8</div>
<div class="t" style="top:575.00px;height:20px;line-height:20px;font-size:11.2px;color:#333;right:432.70px;transform-origin:100% 50%;transform:scaleX(0.9000);">78%</div>
<div class="t" style="top:575.00px;height:20px;line-height:20px;font-size:11.2px;color:#333;right:298.40px;transform-origin:100% 50%;transform:scaleX(0.9243);">100 min</div>
<div class="t" style="top:603.00px;height:20px;line-height:20px;font-size:11.2px;color:#1c1a7e;left:41.4px;transform-origin:0 50%;transform:scaleX(0.8610);">1 C</div>
<div class="t" style="top:603.00px;height:20px;line-height:20px;font-size:11.2px;color:#333;right:969.70px;transform-origin:100% 50%;transform:scaleX(0.9000);">10</div>
<div class="t" style="top:603.00px;height:20px;line-height:20px;font-size:11.2px;color:#333;right:835.50px;transform-origin:100% 50%;transform:scaleX(0.9000);">10</div>
<div class="t" style="top:603.00px;height:20px;line-height:20px;font-size:11.2px;color:#333;right:700.90px;transform-origin:100% 50%;transform:scaleX(0.9000);">6</div>
<div class="t" style="top:603.00px;height:20px;line-height:20px;font-size:11.2px;color:#333;right:566.80px;transform-origin:100% 50%;transform:scaleX(0.9000);">9</div>
<div class="t" style="top:603.00px;height:20px;line-height:20px;font-size:11.2px;color:#333;right:432.70px;transform-origin:100% 50%;transform:scaleX(0.9000);">91%</div>
<div class="t" style="top:603.00px;height:20px;line-height:20px;font-size:11.2px;color:#333;right:298.40px;transform-origin:100% 50%;transform:scaleX(0.9243);">100 min</div>
<div class="t" style="top:632.00px;height:20px;line-height:20px;font-size:11.2px;color:#1c1a7e;left:41.4px;transform-origin:0 50%;transform:scaleX(0.9266);">2 A</div>
<div class="t" style="top:632.00px;height:20px;line-height:20px;font-size:11.2px;color:#333;right:969.70px;transform-origin:100% 50%;transform:scaleX(0.9000);">3</div>
<div class="t" style="top:632.00px;height:20px;line-height:20px;font-size:11.2px;color:#333;right:835.50px;transform-origin:100% 50%;transform:scaleX(0.9000);">3</div>
<div class="t" style="top:632.00px;height:20px;line-height:20px;font-size:11.2px;color:#333;right:700.90px;transform-origin:100% 50%;transform:scaleX(0.9000);">4</div>
<div class="t" style="top:632.00px;height:20px;line-height:20px;font-size:11.2px;color:#333;right:566.80px;transform-origin:100% 50%;transform:scaleX(0.9000);">5</div>
<div class="t" style="top:632.00px;height:20px;line-height:20px;font-size:11.2px;color:#333;right:432.70px;transform-origin:100% 50%;transform:scaleX(0.9000);">48%</div>
<div class="t" style="top:632.00px;height:20px;line-height:20px;font-size:11.2px;color:#333;right:298.40px;transform-origin:100% 50%;transform:scaleX(0.9243);">100 min</div>
<div class="t" style="top:661.00px;height:20px;line-height:20px;font-size:11.2px;color:#1c1a7e;left:41.4px;transform-origin:0 50%;transform:scaleX(0.8633);">2 B</div>
<div class="t" style="top:661.00px;height:20px;line-height:20px;font-size:11.2px;color:#333;right:969.70px;transform-origin:100% 50%;transform:scaleX(0.9000);">4</div>
<div class="t" style="top:661.00px;height:20px;line-height:20px;font-size:11.2px;color:#333;right:835.50px;transform-origin:100% 50%;transform:scaleX(0.9000);">4</div>
<div class="t" style="top:661.00px;height:20px;line-height:20px;font-size:11.2px;color:#333;right:700.90px;transform-origin:100% 50%;transform:scaleX(0.9000);">4</div>
<div class="t" style="top:661.00px;height:20px;line-height:20px;font-size:11.2px;color:#333;right:566.80px;transform-origin:100% 50%;transform:scaleX(0.9000);">5</div>
<div class="t" style="top:661.00px;height:20px;line-height:20px;font-size:11.2px;color:#333;right:432.70px;transform-origin:100% 50%;transform:scaleX(0.9000);">89%</div>
<div class="t" style="top:661.00px;height:20px;line-height:20px;font-size:11.2px;color:#333;right:298.40px;transform-origin:100% 50%;transform:scaleX(0.9243);">100 min</div>
<div class="t" style="top:690.00px;height:20px;line-height:20px;font-size:11.2px;color:#1c1a7e;left:41.4px;transform-origin:0 50%;transform:scaleX(0.9266);">3 A</div>
<div class="t" style="top:690.00px;height:20px;line-height:20px;font-size:11.2px;color:#333;right:969.70px;transform-origin:100% 50%;transform:scaleX(0.9000);">3</div>
<div class="t" style="top:690.00px;height:20px;line-height:20px;font-size:11.2px;color:#333;right:835.50px;transform-origin:100% 50%;transform:scaleX(0.9000);">3</div>
<div class="t" style="top:690.00px;height:20px;line-height:20px;font-size:11.2px;color:#333;right:700.90px;transform-origin:100% 50%;transform:scaleX(0.9000);">8</div>
<div class="t" style="top:690.00px;height:20px;line-height:20px;font-size:11.2px;color:#333;right:566.80px;transform-origin:100% 50%;transform:scaleX(0.9000);">11</div>
<div class="t" style="top:690.00px;height:20px;line-height:20px;font-size:11.2px;color:#333;right:432.70px;transform-origin:100% 50%;transform:scaleX(0.9000);">97%</div>
<div class="t" style="top:690.00px;height:20px;line-height:20px;font-size:11.2px;color:#333;right:298.40px;transform-origin:100% 50%;transform:scaleX(0.9243);">100 min</div>
<div class="t" style="top:718.00px;height:20px;line-height:20px;font-size:11.2px;color:#1c1a7e;left:41.4px;transform-origin:0 50%;transform:scaleX(0.9351);">After School</div>
<div class="t" style="top:718.00px;height:20px;line-height:20px;font-size:11.2px;color:#333;right:969.70px;transform-origin:100% 50%;transform:scaleX(0.9000);">3</div>
<div class="t" style="top:718.00px;height:20px;line-height:20px;font-size:11.2px;color:#333;right:835.50px;transform-origin:100% 50%;transform:scaleX(0.9000);">3</div>
<div class="t" style="top:718.00px;height:20px;line-height:20px;font-size:11.2px;color:#333;right:700.90px;transform-origin:100% 50%;transform:scaleX(0.9000);">10</div>
<div class="t" style="top:718.00px;height:20px;line-height:20px;font-size:11.2px;color:#333;right:566.80px;transform-origin:100% 50%;transform:scaleX(0.9000);">12</div>
<div class="t" style="top:718.00px;height:20px;line-height:20px;font-size:11.2px;color:#333;right:432.70px;transform-origin:100% 50%;transform:scaleX(0.9000);">94%</div>
<div class="t" style="top:718.00px;height:20px;line-height:20px;font-size:11.2px;color:#333;right:298.40px;transform-origin:100% 50%;transform:scaleX(0.9243);">100 min</div>
<div class="t" style="top:747.00px;height:20px;line-height:20px;font-size:11.2px;color:#1c1a7e;left:41.4px;transform-origin:0 50%;transform:scaleX(0.9498);">4A</div>
<div class="t" style="top:747.00px;height:20px;line-height:20px;font-size:11.2px;color:#333;right:969.70px;transform-origin:100% 50%;transform:scaleX(0.9000);">37</div>
<div class="t" style="top:747.00px;height:20px;line-height:20px;font-size:11.2px;color:#333;right:835.50px;transform-origin:100% 50%;transform:scaleX(0.9000);">30</div>
<div class="t" style="top:747.00px;height:20px;line-height:20px;font-size:11.2px;color:#333;right:700.90px;transform-origin:100% 50%;transform:scaleX(0.9000);">6</div>
<div class="t" style="top:747.00px;height:20px;line-height:20px;font-size:11.2px;color:#333;right:566.80px;transform-origin:100% 50%;transform:scaleX(0.9000);">8</div>
<div class="t" style="top:747.00px;height:20px;line-height:20px;font-size:11.2px;color:#333;right:432.70px;transform-origin:100% 50%;transform:scaleX(0.9000);">97%</div>
<div class="t" style="top:747.00px;height:20px;line-height:20px;font-size:11.2px;color:#333;right:298.40px;transform-origin:100% 50%;transform:scaleX(0.9243);">100 min</div>
<div class="t" style="top:776.00px;height:20px;line-height:20px;font-size:11.2px;color:#1c1a7e;left:41.4px;transform-origin:0 50%;transform:scaleX(0.9132);">4B</div>
<div class="t" style="top:776.00px;height:20px;line-height:20px;font-size:11.2px;color:#333;right:969.70px;transform-origin:100% 50%;transform:scaleX(0.9000);">7</div>
<div class="t" style="top:776.00px;height:20px;line-height:20px;font-size:11.2px;color:#333;right:835.50px;transform-origin:100% 50%;transform:scaleX(0.9000);">7</div>
<div class="t" style="top:776.00px;height:20px;line-height:20px;font-size:11.2px;color:#333;right:700.90px;transform-origin:100% 50%;transform:scaleX(0.9000);">6</div>
<div class="t" style="top:776.00px;height:20px;line-height:20px;font-size:11.2px;color:#333;right:566.80px;transform-origin:100% 50%;transform:scaleX(0.9000);">8</div>
<div class="t" style="top:776.00px;height:20px;line-height:20px;font-size:11.2px;color:#333;right:432.70px;transform-origin:100% 50%;transform:scaleX(0.9000);">139%</div>
<div class="t" style="top:776.00px;height:20px;line-height:20px;font-size:11.2px;color:#333;right:298.40px;transform-origin:100% 50%;transform:scaleX(0.9243);">100 min</div>
<div class="t" style="top:805.00px;height:20px;line-height:20px;font-size:11.2px;color:#1c1a7e;left:41.4px;transform-origin:0 50%;transform:scaleX(0.9498);">5A</div>
<div class="t" style="top:805.00px;height:20px;line-height:20px;font-size:11.2px;color:#333;right:969.70px;transform-origin:100% 50%;transform:scaleX(0.9000);">5</div>
<div class="t" style="top:805.00px;height:20px;line-height:20px;font-size:11.2px;color:#333;right:835.50px;transform-origin:100% 50%;transform:scaleX(0.9000);">5</div>
<div class="t" style="top:805.00px;height:20px;line-height:20px;font-size:11.2px;color:#333;right:700.90px;transform-origin:100% 50%;transform:scaleX(0.9000);">4</div>
<div class="t" style="top:805.00px;height:20px;line-height:20px;font-size:11.2px;color:#333;right:566.80px;transform-origin:100% 50%;transform:scaleX(0.9000);">4</div>
<div class="t" style="top:805.00px;height:20px;line-height:20px;font-size:11.2px;color:#333;right:432.70px;transform-origin:100% 50%;transform:scaleX(0.9000);">96%</div>
<div class="t" style="top:805.00px;height:20px;line-height:20px;font-size:11.2px;color:#333;right:298.40px;transform-origin:100% 50%;transform:scaleX(0.9243);">100 min</div>
<div class="t" style="top:842.00px;height:20px;line-height:20px;font-size:11.2px;color:#fff;font-weight:700;left:-194.70px;width:600px;text-align:center;transform-origin:50% 50%;"><span>1</span></div>
<div class="t" style="top:842.00px;height:20px;line-height:20px;font-size:11.2px;color:#1c1a7e;left:-169.40px;width:600px;text-align:center;transform-origin:50% 50%;"><span>2</span></div>
<div class="t" style="top:842.00px;height:20px;line-height:20px;font-size:11.2px;color:#222;left:217.6px;transform-origin:0 50%;transform:scaleX(0.9315);">10</div>
<div class="t" style="top:842.30px;height:20px;line-height:20px;font-size:11.2px;color:#333;left:267.8px;transform-origin:0 50%;transform:scaleX(0.8985);">items per page</div>
<div class="t" style="top:841.90px;height:20px;line-height:20px;font-size:11.2px;color:#333;left:878.2px;transform-origin:0 50%;transform:scaleX(0.9035);">1 - 10 of 12 items</div>
</div></body></html>
